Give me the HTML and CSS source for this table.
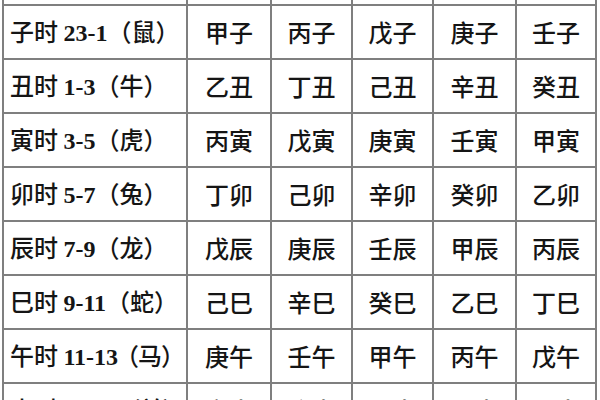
FILE: index.html
```html
<!DOCTYPE html>
<html lang="zh">
<head>
<meta charset="utf-8">
<link rel="stylesheet" href="styles.css">
</head>
<body>
<div class="table">
  <div class="cell first"></div><div class="cell"></div><div class="cell"></div><div class="cell"></div><div class="cell"></div><div class="cell"></div>

  <div class="cell first"><span class="label">子时 <span class="num">23-1</span>（鼠）</span></div><div class="cell">甲子</div><div class="cell">丙子</div><div class="cell">戊子</div><div class="cell">庚子</div><div class="cell">壬子</div>

  <div class="cell first"><span class="label">丑时 <span class="num">1-3</span>（牛）</span></div><div class="cell">乙丑</div><div class="cell">丁丑</div><div class="cell">己丑</div><div class="cell">辛丑</div><div class="cell">癸丑</div>

  <div class="cell first"><span class="label">寅时 <span class="num">3-5</span>（虎）</span></div><div class="cell">丙寅</div><div class="cell">戊寅</div><div class="cell">庚寅</div><div class="cell">壬寅</div><div class="cell">甲寅</div>

  <div class="cell first"><span class="label">卯时 <span class="num">5-7</span>（兔）</span></div><div class="cell">丁卯</div><div class="cell">己卯</div><div class="cell">辛卯</div><div class="cell">癸卯</div><div class="cell">乙卯</div>

  <div class="cell first"><span class="label">辰时 <span class="num">7-9</span>（龙）</span></div><div class="cell">戊辰</div><div class="cell">庚辰</div><div class="cell">壬辰</div><div class="cell">甲辰</div><div class="cell">丙辰</div>

  <div class="cell first"><span class="label">巳时 <span class="num">9-11</span>（蛇）</span></div><div class="cell">己巳</div><div class="cell">辛巳</div><div class="cell">癸巳</div><div class="cell">乙巳</div><div class="cell">丁巳</div>

  <div class="cell first"><span class="label">午时 <span class="num">11-13</span><span class="tight">（马）</span></span></div><div class="cell">庚午</div><div class="cell">壬午</div><div class="cell">甲午</div><div class="cell">丙午</div><div class="cell">戊午</div>

  <div class="cell first"><span class="label">未时 <span class="num">13-15</span><span class="tight">（羊）</span></span></div><div class="cell">辛未</div><div class="cell">癸未</div><div class="cell">乙未</div><div class="cell">丁未</div><div class="cell">己未</div>
</div>
</body>
</html>
```

FILE: styles.css
```css
html, body {
  margin: 0;
  padding: 0;
  background: #ffffff;
  overflow: hidden;
  width: 600px;
  height: 400px;
}

.table {
  display: grid;
  grid-template-columns: 182px 82px 79px 79px 81px 78px;
  grid-auto-rows: 52px;
  gap: 2px;
  padding: 2px;
  background: #7f7f7f;
  width: max-content;
  margin: -50px 0 0 2px;
}

.cell {
  background: #ffffff;
  display: flex;
  align-items: center;
  justify-content: center;
  font-family: "Noto Sans CJK SC", "Noto Sans CJK JP", sans-serif;
  font-size: 24px;
  font-weight: 500;
  color: #151515;
  white-space: nowrap;
  line-height: 1;
}

.cell.first {
  justify-content: flex-start;
  padding-left: 6px;
}

.label {
  white-space: pre;
}

.num {
  font-family: "Liberation Serif", "Times New Roman", serif;
  font-weight: bold;
  font-size: 24px;
}

.tight {
  margin-left: -3px;
  letter-spacing: -1px;
}
```
